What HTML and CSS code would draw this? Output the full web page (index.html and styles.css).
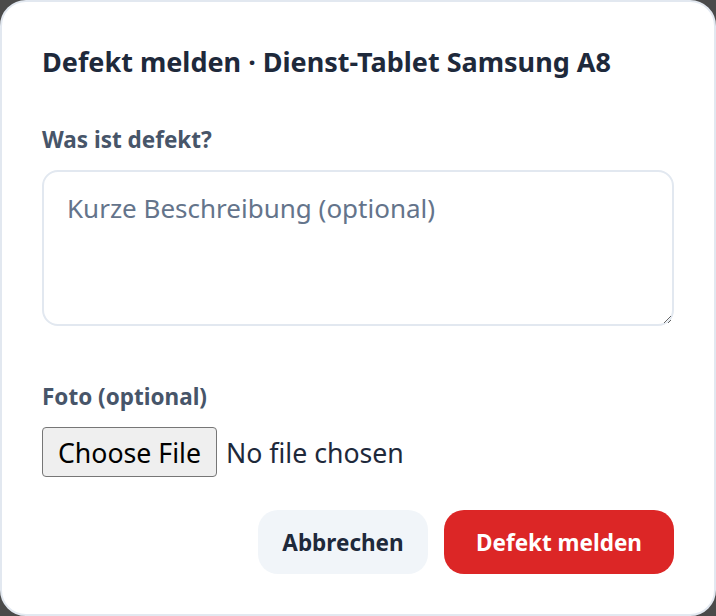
FILE: index.html
```html
<!DOCTYPE html>
<html lang="de">
<head>
<meta charset="utf-8">
<title>Defekt melden</title>
<link rel="stylesheet" href="styles.css">
</head>
<body>
<div class="dialog">
  <h2 class="title">Defekt melden · Dienst-Tablet Samsung A8</h2>
  <label class="label label-first" for="desc">Was ist defekt?</label>
  <textarea id="desc" class="area" placeholder="Kurze Beschreibung (optional)"></textarea>
  <label class="label label-photo" for="photo">Foto (optional)</label>
  <input id="photo" class="file" type="file" accept="image/*">
  <div class="actions">
    <button class="btn btn-cancel" type="button">Abbrechen</button>
    <button class="btn btn-primary" type="button">Defekt melden</button>
  </div>
</div>
</body>
</html>
```

FILE: styles.css
```css
* { box-sizing: border-box; }
html, body { margin: 0; padding: 0; height: 100%; }
body {
  background: #4a4a4a;
  font-family: "Noto Sans", "Open Sans", sans-serif;
}
.dialog {
  width: 716px;
  height: 616px;
  background: #ffffff;
  border: 2px solid #e2e8f0;
  border-radius: 26px;
  padding: 42px 40px 0 40px;
  display: flex;
  flex-direction: column;
}
.title {
  margin: 0;
  font-size: 27px;
  line-height: 36px;
  font-weight: 700;
  color: #1e293b;
  white-space: nowrap;
}
.label {
  display: block;
  font-size: 22.5px;
  line-height: 30px;
  font-weight: 700;
  color: #475569;
}
.label-first { margin-top: 45px; }
.area {
  margin-top: 15px;
  width: 632px;
  height: 156px;
  border: 2px solid #e2e8f0;
  border-radius: 16px;
  padding: 18px 23px;
  font-family: inherit;
  font-size: 26px;
  line-height: 36px;
  color: #1e293b;
  resize: vertical;
  outline: none;
}
.area::placeholder { color: #64748b; }
.label-photo { margin-top: 56px; }
.file {
  margin-top: 15px;
  font-family: inherit;
  font-size: 26.67px;
  color: #1e293b;
  width: 420px;
  height: 50px;
}
.file::file-selector-button {
  font-family: inherit;
  font-size: 26.67px;
  color: #000;
  background: #efefef;
  border: 1px solid #767676;
  border-radius: 4px;
  height: 50px;
  padding: 0 15px;
  margin-right: 9px;
}
.actions {
  margin-top: 33px;
  display: flex;
  justify-content: flex-end;
  gap: 16px;
}
.btn {
  height: 64px;
  border: none;
  border-radius: 20px;
  font-family: inherit;
  font-size: 22.5px;
  font-weight: 700;
  padding: 0;
}
.btn-cancel { background: #f1f5f9; color: #1e293b; width: 170px; }
.btn-primary { background: #dc2626; color: #ffffff; width: 230px; }
```
